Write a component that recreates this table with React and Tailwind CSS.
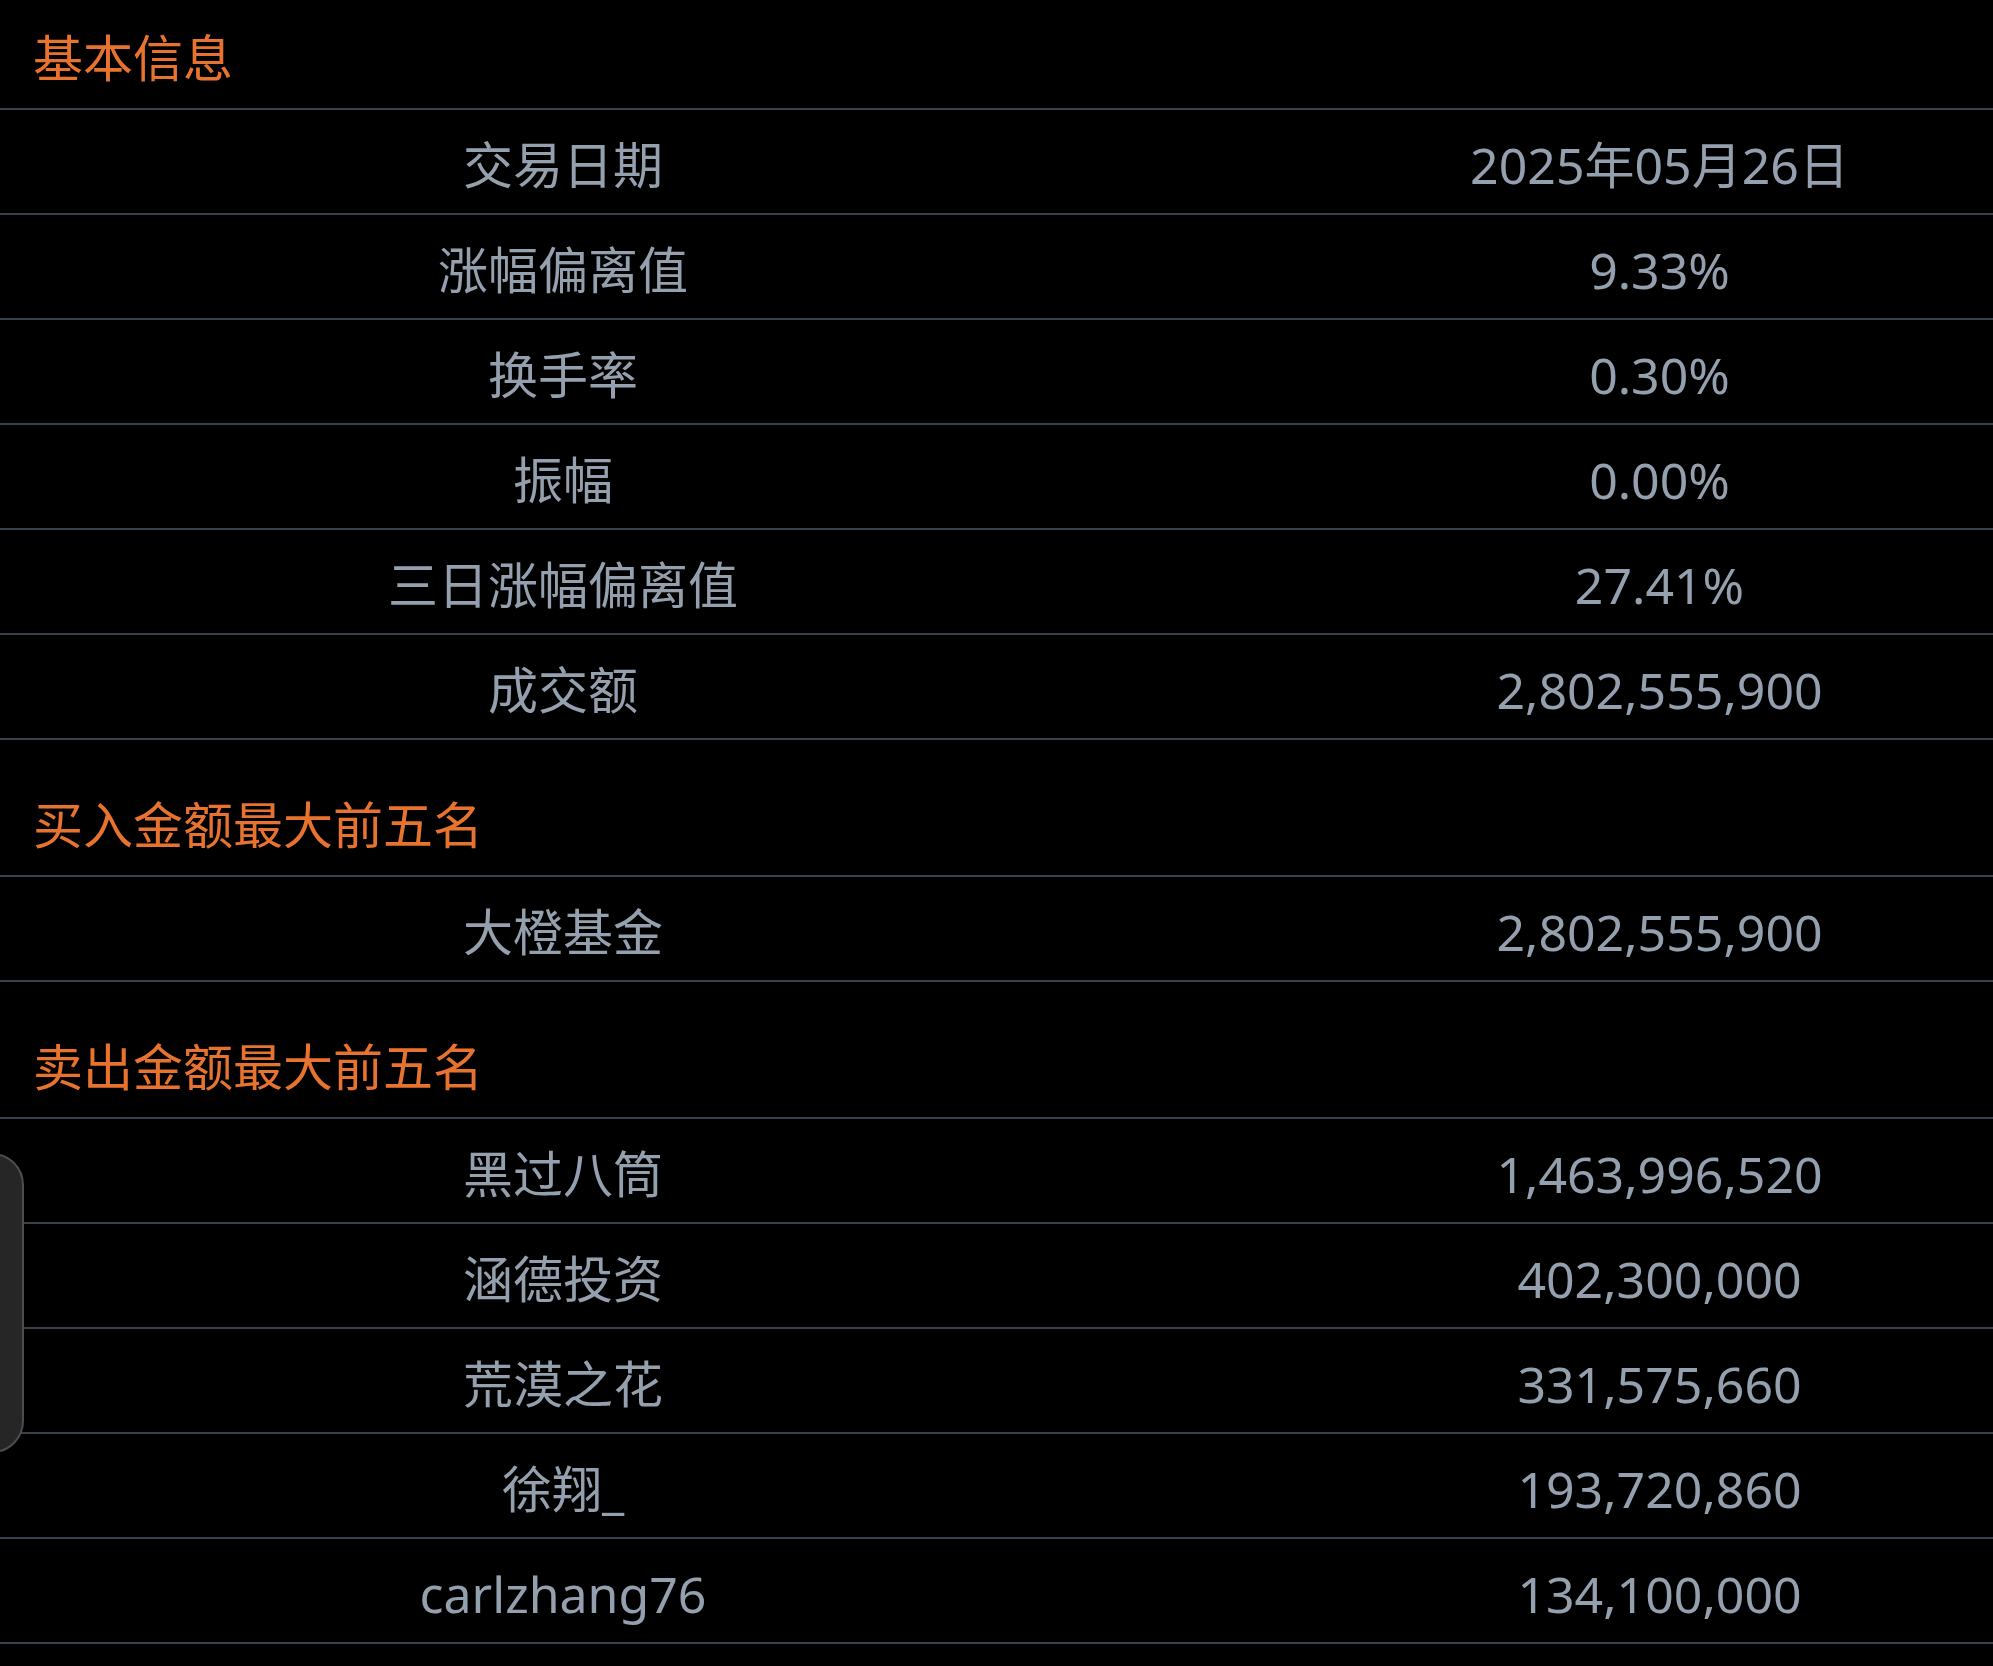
import React from "react";

const sections = [
  {
    title: "基本信息",
    rows: [
      { label: "交易日期", value: "2025年05月26日" },
      { label: "涨幅偏离值", value: "9.33%" },
      { label: "换手率", value: "0.30%" },
      { label: "振幅", value: "0.00%" },
      { label: "三日涨幅偏离值", value: "27.41%" },
      { label: "成交额", value: "2,802,555,900" },
    ],
  },
  {
    title: "买入金额最大前五名",
    rows: [{ label: "大橙基金", value: "2,802,555,900" }],
  },
  {
    title: "卖出金额最大前五名",
    rows: [
      { label: "黑过八筒", value: "1,463,996,520" },
      { label: "涵德投资", value: "402,300,000" },
      { label: "荒漠之花", value: "331,575,660" },
      { label: "徐翔_", value: "193,720,860" },
      { label: "carlzhang76", value: "134,100,000" },
    ],
  },
];

function Section({ title, rows, first }) {
  return (
    <div className={first ? "" : "mt-[27px]"}>
      <div className="h-[110px] flex items-center pt-[8px] pl-[33px] border-b-2 border-[#38404b]">
        <h3 className="text-[50px] leading-none text-[#e8732f]">{title}</h3>
      </div>
      {rows.map((row, index) => (
        <div
          key={index}
          className="h-[105px] flex items-center pt-[6px] border-b-2 border-[#38404b] text-[50px] leading-none text-[#94a0ae]"
        >
          <span className="w-[1126px] text-center">{row.label}</span>
          <span className="flex-1 pl-[200px] text-center">{row.value}</span>
        </div>
      ))}
    </div>
  );
}

export default function App() {
  return (
    <div
      className="relative min-h-[1666px] w-full overflow-hidden bg-black"
      style={{ fontFamily: '"Noto Sans", "Noto Sans CJK SC", sans-serif' }}
    >
      {sections.map((section, index) => (
        <Section key={index} {...section} first={index === 0} />
      ))}

      {/* side handle overlay */}
      <div className="absolute left-[-40px] top-[1153px] w-[64px] h-[300px] rounded-[34px] bg-[#262626] border-2 border-[#4d4d4d]" />
    </div>
  );
}
